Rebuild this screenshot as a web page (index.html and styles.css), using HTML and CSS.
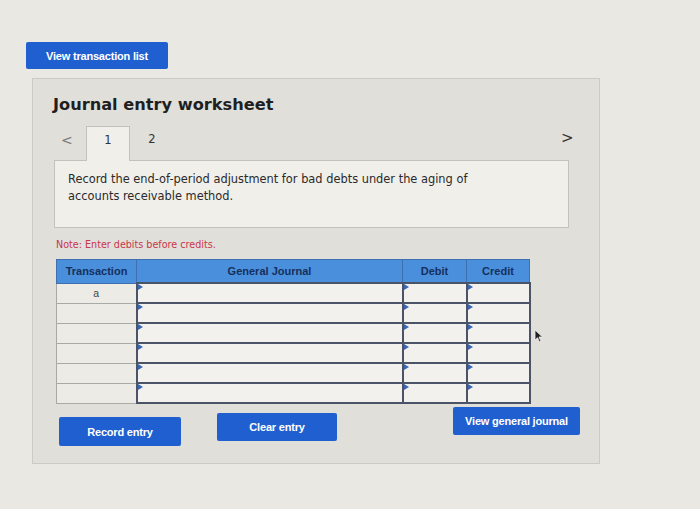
FILE: index.html
```html
<!DOCTYPE html>
<html>
<head>
<meta charset="utf-8">
<link rel="stylesheet" href="styles.css">
</head>
<body>
<div class="page">
  <button class="btn btn-top">View transaction list</button>
  <div class="panel">
    <h1 class="title">Journal entry worksheet</h1>
    <div class="tabs">
      <span class="arrow">&lt;</span>
      <span class="tab active">1</span>
      <span class="tab">2</span>
      <span class="spacer"></span>
      <span class="arrow right">&gt;</span>
    </div>
    <div class="box">
      <p>Record the end-of-period adjustment for bad debts under the aging of accounts receivable method.</p>
    </div>
    <p class="note">Note: Enter debits before credits.</p>
    <table class="journal">
      <thead>
        <tr>
          <th class="c-tr">Transaction</th>
          <th class="c-gj">General Journal</th>
          <th class="c-dr">Debit</th>
          <th class="c-cr">Credit</th>
        </tr>
      </thead>
      <tbody>
        <tr><td class="t">a</td><td class="in"></td><td class="in"></td><td class="in"></td></tr>
        <tr><td class="t"></td><td class="in"></td><td class="in"></td><td class="in"></td></tr>
        <tr><td class="t"></td><td class="in"></td><td class="in"></td><td class="in"></td></tr>
        <tr><td class="t"></td><td class="in"></td><td class="in"></td><td class="in"></td></tr>
        <tr><td class="t"></td><td class="in"></td><td class="in"></td><td class="in"></td></tr>
        <tr><td class="t"></td><td class="in"></td><td class="in"></td><td class="in"></td></tr>
      </tbody>
    </table>
    <div class="actions">
      <button class="btn b-record">Record entry</button>
      <button class="btn b-clear">Clear entry</button>
      <span class="spacer"></span>
      <button class="btn b-view">View general journal</button>
    </div>
    <svg class="cursor" width="10" height="14" viewBox="0 0 10 14"><path d="M1 1 L1 11 L3.5 8.7 L5.5 13 L7 12.3 L5 8 L8.5 8 Z" fill="#222" stroke="#eee" stroke-width="0.8"/></svg>
  </div>
</div>
</body>
</html>
```

FILE: styles.css
```css
html, body {
  margin: 0;
  padding: 0;
  background: #e9e8e3;
}
.page {
  width: 700px;
  height: 509px;
  padding-top: 42px;
  box-sizing: border-box;
  font-family: "DejaVu Sans", Verdana, sans-serif;
}
.btn {
  display: block;
  border: none;
  background: #1f5fcf;
  color: #fff;
  font-family: "Liberation Sans", Arial, sans-serif;
  font-weight: bold;
  font-size: 11px;
  border-radius: 2px;
  padding: 0;
  letter-spacing: -0.2px;
}
.btn-top {
  margin-left: 26px;
  width: 142px;
  height: 27px;
}
.panel {
  position: relative;
  margin-top: 9px;
  margin-left: 32px;
  width: 568px;
  height: 386px;
  box-sizing: border-box;
  background: #e0dfda;
  border: 1px solid #cbcac5;
  padding: 16px 0 0 20px;
}
.title {
  margin: 0;
  font-size: 16.2px;
  font-weight: bold;
  color: #1f1f1f;
  line-height: 20px;
}
.tabs {
  display: flex;
  align-items: stretch;
  margin-top: 11px;
  margin-left: 6px;
  width: 516px;
  height: 34px;
}
.arrow {
  width: 27px;
  font-size: 14px;
  color: #777;
  line-height: 28px;
  padding-left: 2px;
  box-sizing: border-box;
}
.arrow.right {
  width: 16px;
  color: #333;
  font-size: 15px;
  line-height: 24px;
}
.tab {
  width: 44px;
  text-align: center;
  font-size: 11.5px;
  color: #333;
  line-height: 26px;
  box-sizing: border-box;
}
.tab.active {
  background: #f0efea;
  border: 1px solid #c3c2bd;
  border-bottom: none;
  position: relative;
  z-index: 1;
  height: 35px;
}
.spacer { flex: 1; }
.box {
  margin-left: 1px;
  width: 515px;
  height: 68px;
  box-sizing: border-box;
  background: #f0efea;
  border: 1px solid #c3c2bd;
  padding: 10px 10px 0 13px;
}
.box p {
  margin: 0;
  font-size: 11.4px;
  line-height: 17px;
  color: #2a2a2a;
  width: 420px;
}
.note {
  margin: 11px 0 0 3px;
  font-size: 9.6px;
  color: #c9364a;
  line-height: 12px;
}
.journal {
  margin-top: 8px;
  margin-left: 3px;
  border-collapse: collapse;
  width: 470px;
  table-layout: fixed;
}
.journal th {
  background: #4a8fdb;
  color: #15305e;
  font-family: "Liberation Sans", Arial, sans-serif;
  font-size: 11px;
  font-weight: bold;
  height: 22px;
  padding: 0;
  border: 1px solid #3f6faf;
  vertical-align: middle;
}
.c-tr { width: 79px; }
.c-gj { width: 265px; }
.c-dr { width: 63px; }
.c-cr { width: 62px; }
.journal td {
  height: 18px;
  padding: 0;
}
.journal td.t {
  background: #ecebe6;
  border: 1px solid #a9a9a6;
  text-align: center;
  font-family: "Liberation Sans", Arial, sans-serif;
  font-size: 10.5px;
  color: #444;
}
.journal td.in {
  background: #f2f1ed;
  border: 2px solid #4b5467;
  position: relative;
}
.journal td.in::before {
  content: "";
  position: absolute;
  left: 0;
  top: 0;
  border-left: 5px solid #3a66b0;
  border-top: 3px solid transparent;
  border-bottom: 3px solid transparent;
}
.actions {
  display: flex;
  align-items: flex-start;
  margin-top: 9px;
  margin-left: 6px;
  width: 521px;
}
.b-record {
  width: 122px;
  height: 29px;
  margin-top: 4px;
}
.b-clear {
  width: 120px;
  height: 28px;
  margin-left: 36px;
  margin-top: 0;
}
.b-view {
  width: 127px;
  height: 28px;
  margin-top: -6px;
}
.cursor {
  position: absolute;
  left: 501px;
  top: 250px;
}
```
